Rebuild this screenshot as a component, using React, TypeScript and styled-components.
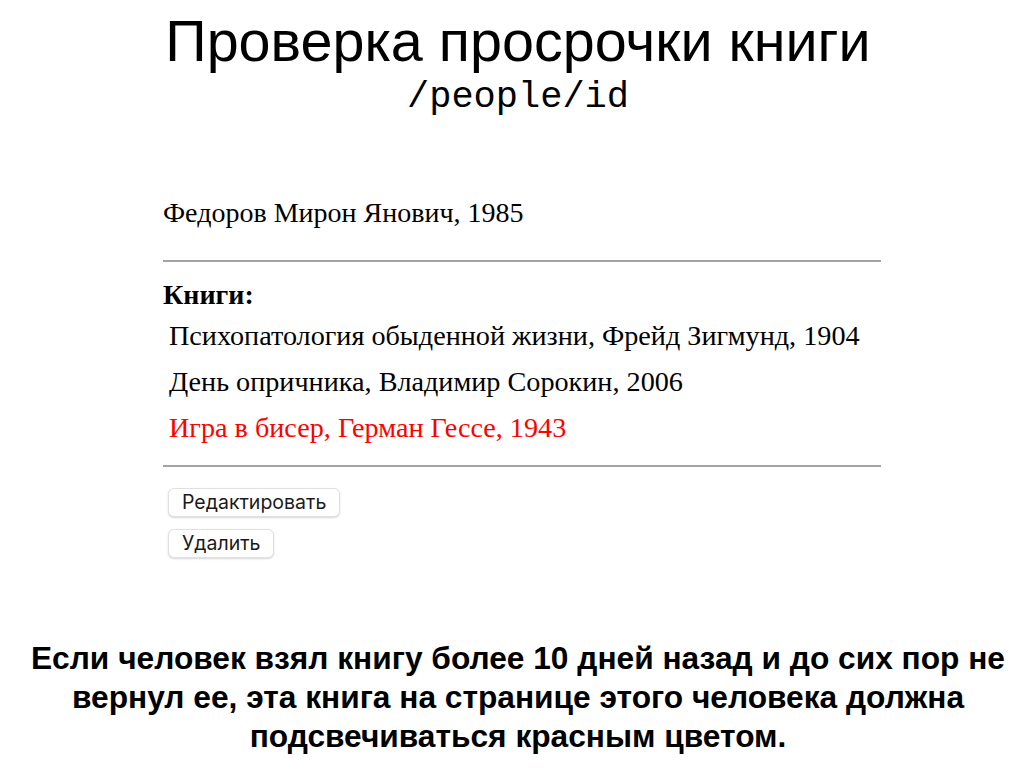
import React from "react";
import styled, { createGlobalStyle } from "styled-components";

const Global = createGlobalStyle`
  html, body { margin: 0; padding: 0; background: #fff; }
  body { font-family: "Liberation Serif", "Times New Roman", serif; color: #000; }
`;

const Page = styled.div`
  width: 1036px;
  min-height: 772px;
  display: flex;
  flex-direction: column;
  align-items: center;
`;

const Title = styled.h1`
  margin: 9px 0 0;
  font-family: "Liberation Sans", Arial, sans-serif;
  font-weight: 400;
  font-size: 57.5px;
  line-height: 64px;
  text-align: center;
`;

const Route = styled.div`
  font-family: "Liberation Mono", "Courier New", monospace;
  font-size: 37px;
  line-height: 42px;
  margin-top: 3px;
  text-align: center;
`;

const Card = styled.section`
  width: 718px;
  margin: 79px 0 0 8px;
  display: flex;
  flex-direction: column;
`;

const Person = styled.div`
  font-size: 28px;
  line-height: 32px;
`;

const Rule = styled.hr<{ $top: number; $bottom: number }>`
  width: 100%;
  margin: ${(p) => `${p.$top}px 0 ${p.$bottom}px`};
  border: none;
  height: 2px;
  background: #a3a3a3;
`;

const BooksLabel = styled.div`
  font-size: 28px;
  font-weight: 700;
  line-height: 32px;
`;

const BookList = styled.ul`
  list-style: none;
  margin: 9px 0 0;
  padding: 0 0 0 6px;
  display: flex;
  flex-direction: column;
  gap: 14px;
`;

const Book = styled.li<{ $overdue?: boolean }>`
  font-size: 28.2px;
  line-height: 32px;
  color: ${(p) => (p.$overdue ? "#ff0000" : "#000")};
`;

const Actions = styled.div`
  display: flex;
  flex-direction: column;
  align-items: flex-start;
  gap: 12px;
  padding-left: 5px;
`;

const Button = styled.button`
  font-family: Inter, "Liberation Sans", Arial, sans-serif;
  font-size: 19.5px;
  color: #1a1a1a;
  background: #fff;
  border: 1px solid #e0e0e0;
  border-radius: 6px;
  box-shadow: 0 1px 2px rgba(0, 0, 0, 0.16);
  padding: 2px 13px;
  line-height: 23px;
`;

const Note = styled.p`
  margin: 81px 0 0;
  width: 1020px;
  font-family: "Liberation Sans", Arial, sans-serif;
  font-weight: 700;
  font-size: 31.7px;
  line-height: 39px;
  text-align: center;
`;

const books = [
  { title: "Психопатология обыденной жизни, Фрейд Зигмунд, 1904", overdue: false },
  { title: "День опричника, Владимир Сорокин, 2006", overdue: false },
  { title: "Игра в бисер, Герман Гессе, 1943", overdue: true },
];

export default function App() {
  return (
    <Page>
      <Global />
      <Title>Проверка просрочки книги</Title>
      <Route>/people/id</Route>
      <Card>
        <Person>Федоров Мирон Янович, 1985</Person>
        <Rule $top={31} $bottom={17} />
        <BooksLabel>Книги:</BooksLabel>
        <BookList>
          {books.map((b) => (
            <Book key={b.title} $overdue={b.overdue}>
              {b.title}
            </Book>
          ))}
        </BookList>
        <Rule $top={21} $bottom={21} />
        <Actions>
          <Button>Редактировать</Button>
          <Button>Удалить</Button>
        </Actions>
      </Card>
      <Note>
        Если человек взял книгу более 10 дней назад и до сих пор не вернул ее, эта книга на странице этого человека должна подсвечиваться красным цветом.
      </Note>
    </Page>
  );
}
